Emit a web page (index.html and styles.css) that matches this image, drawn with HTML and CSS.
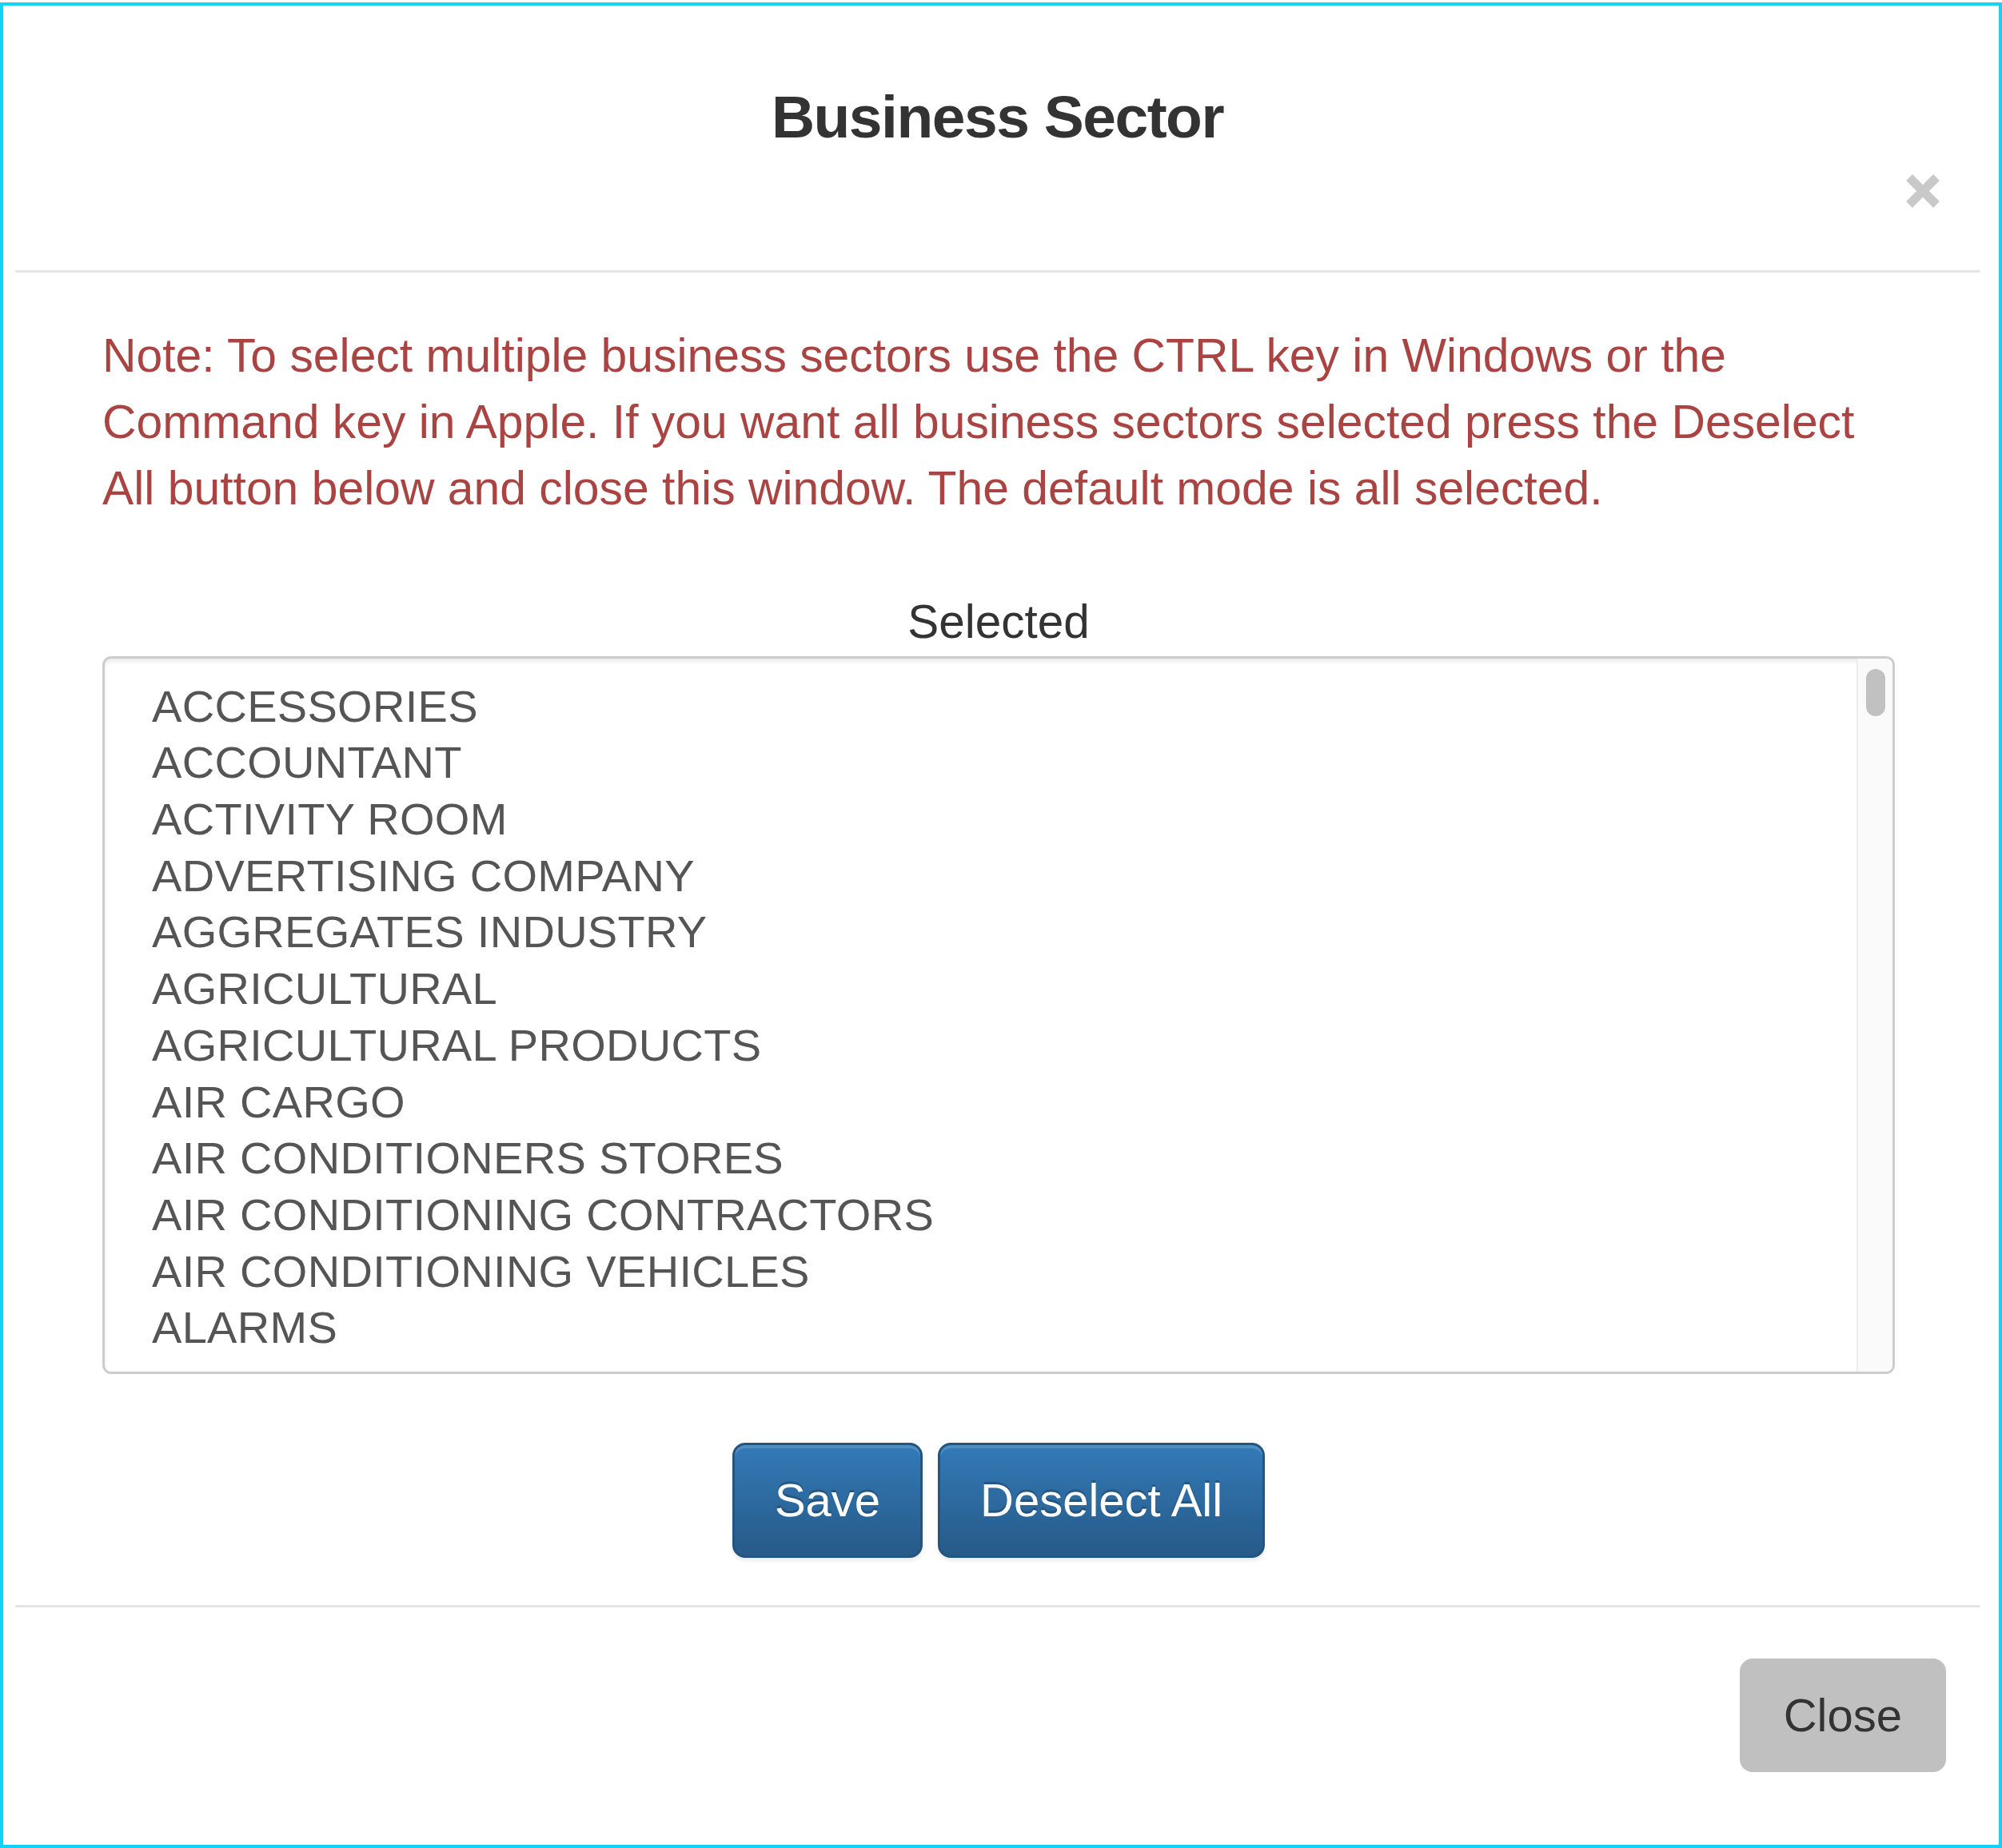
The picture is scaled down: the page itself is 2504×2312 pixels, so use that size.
FILE: index.html
```html
<!DOCTYPE html>
<html lang="en">
<head>
<meta charset="utf-8">
<title>Business Sector</title>
<link rel="stylesheet" href="styles.css">
</head>
<body>
<div class="frame">
  <div class="modal-header">
    <h4 class="modal-title">Business Sector</h4>
    <div class="close-row">
      <button class="close" aria-label="Close">
        <svg width="42" height="42" viewBox="0 0 42 42"><path d="M4 4 L38 38 M38 4 L4 38" stroke="#c9c9c9" stroke-width="11" fill="none"/></svg>
      </button>
    </div>
  </div>
  <div class="modal-body">
    <p class="note">Note: To select multiple business sectors use the CTRL key in Windows or the Command key in Apple. If you want all business sectors selected press the Deselect All button below and close this window. The default mode is all selected.</p>
    <div class="list-label">Selected</div>
    <div class="listbox">
      <ul class="options">
        <li>ACCESSORIES</li>
        <li>ACCOUNTANT</li>
        <li>ACTIVITY ROOM</li>
        <li>ADVERTISING COMPANY</li>
        <li>AGGREGATES INDUSTRY</li>
        <li>AGRICULTURAL</li>
        <li>AGRICULTURAL PRODUCTS</li>
        <li>AIR CARGO</li>
        <li>AIR CONDITIONERS STORES</li>
        <li>AIR CONDITIONING CONTRACTORS</li>
        <li>AIR CONDITIONING VEHICLES</li>
        <li>ALARMS</li>
      </ul>
      <div class="scrolltrack"><div class="thumb"></div></div>
    </div>
    <div class="actions">
      <button class="btn btn-primary">Save</button>
      <button class="btn btn-primary">Deselect All</button>
    </div>
  </div>
  <div class="modal-footer">
    <button class="btn btn-close">Close</button>
  </div>
</div>
</body>
</html>
```
FILE: styles.css
```css
html, body {
  margin: 0;
  background: #ffffff;
}
body {
  padding-top: 3px;
  font-family: "Liberation Sans", Arial, Helvetica, sans-serif;
}
.frame {
  box-sizing: border-box;
  width: 2504px;
  height: 2309px;
  border: 4px solid #12d2f7;
  background: #ffffff;
  display: flex;
  flex-direction: column;
  overflow: hidden;
}
.modal-header {
  margin: 0 24px 0 15px;
  padding: 97.5px 0 78px;
  border-bottom: 3px solid #e5e5e5;
}
.modal-title {
  margin: 0;
  font-size: 75px;
  line-height: 83px;
  font-weight: bold;
  letter-spacing: -1.5px;
  color: #333333;
  text-align: center;
}
.close-row {
  display: flex;
  justify-content: flex-end;
  margin-top: 30.5px;
  padding-right: 50px;
}
.close {
  display: block;
  padding: 0;
  margin: 0;
  border: 0;
  background: transparent;
  width: 42px;
  height: 42px;
}
.close svg {
  display: block;
}
.modal-body {
  padding: 62.4px 130px 59px 124px;
}
.note {
  margin: 0 20px 0 0;
  font-size: 58.85px;
  line-height: 83px;
  color: #a94442;
}
.list-label {
  margin-top: 84px;
  text-align: center;
  font-size: 58.5px;
  line-height: 83px;
  color: #333333;
}
.listbox {
  margin: 1.6px 0 0 0;
  height: 898px;
  box-sizing: border-box;
  border: 3px solid #cccccc;
  border-radius: 11px;
  display: flex;
  overflow: hidden;
  box-shadow: inset 0 4px 4px rgba(0, 0, 0, 0.08);
}
.options {
  flex: 1;
  list-style: none;
  margin: 0;
  padding: 24.6px 0 0 59px;
  font-size: 56px;
  letter-spacing: 0.3px;
  line-height: 70.7px;
  color: #555555;
  overflow: hidden;
}
.options li {
  white-space: nowrap;
}
.scrolltrack {
  width: 43px;
  border-left: 2px solid #ececec;
  background: #fafafa;
}
.thumb {
  width: 24px;
  height: 59px;
  margin: 13px 0 0 10px;
  border-radius: 12px;
  background: #c1c1c1;
}
.actions {
  display: flex;
  justify-content: center;
  gap: 19px;
  margin-top: 86px;
}
.btn {
  box-sizing: border-box;
  font-family: "Liberation Sans", Arial, Helvetica, sans-serif;
  font-size: 58px;
  margin: 0;
  cursor: pointer;
}
.btn-primary {
  height: 144px;
  line-height: 138px;
  padding: 0 50px;
  border: 3px solid #245580;
  border-radius: 16px;
  color: #ffffff;
  background: linear-gradient(to bottom, #337ab7 0%, #265a88 100%);
  text-shadow: 0 -3px 0 rgba(0, 0, 0, 0.2);
  box-shadow: inset 0 4px 0 rgba(255, 255, 255, 0.15), 0 4px 4px rgba(0, 0, 0, 0.075);
}
.modal-footer {
  margin: 0 24px 0 15px;
  padding: 64px 42px 0 0;
  border-top: 3px solid #e5e5e5;
  display: flex;
  justify-content: flex-end;
}
.btn-close {
  height: 142px;
  line-height: 142px;
  padding: 0 55px;
  border: 0;
  border-radius: 16px;
  background: #c0c0c0;
  color: #333333;
}
```
